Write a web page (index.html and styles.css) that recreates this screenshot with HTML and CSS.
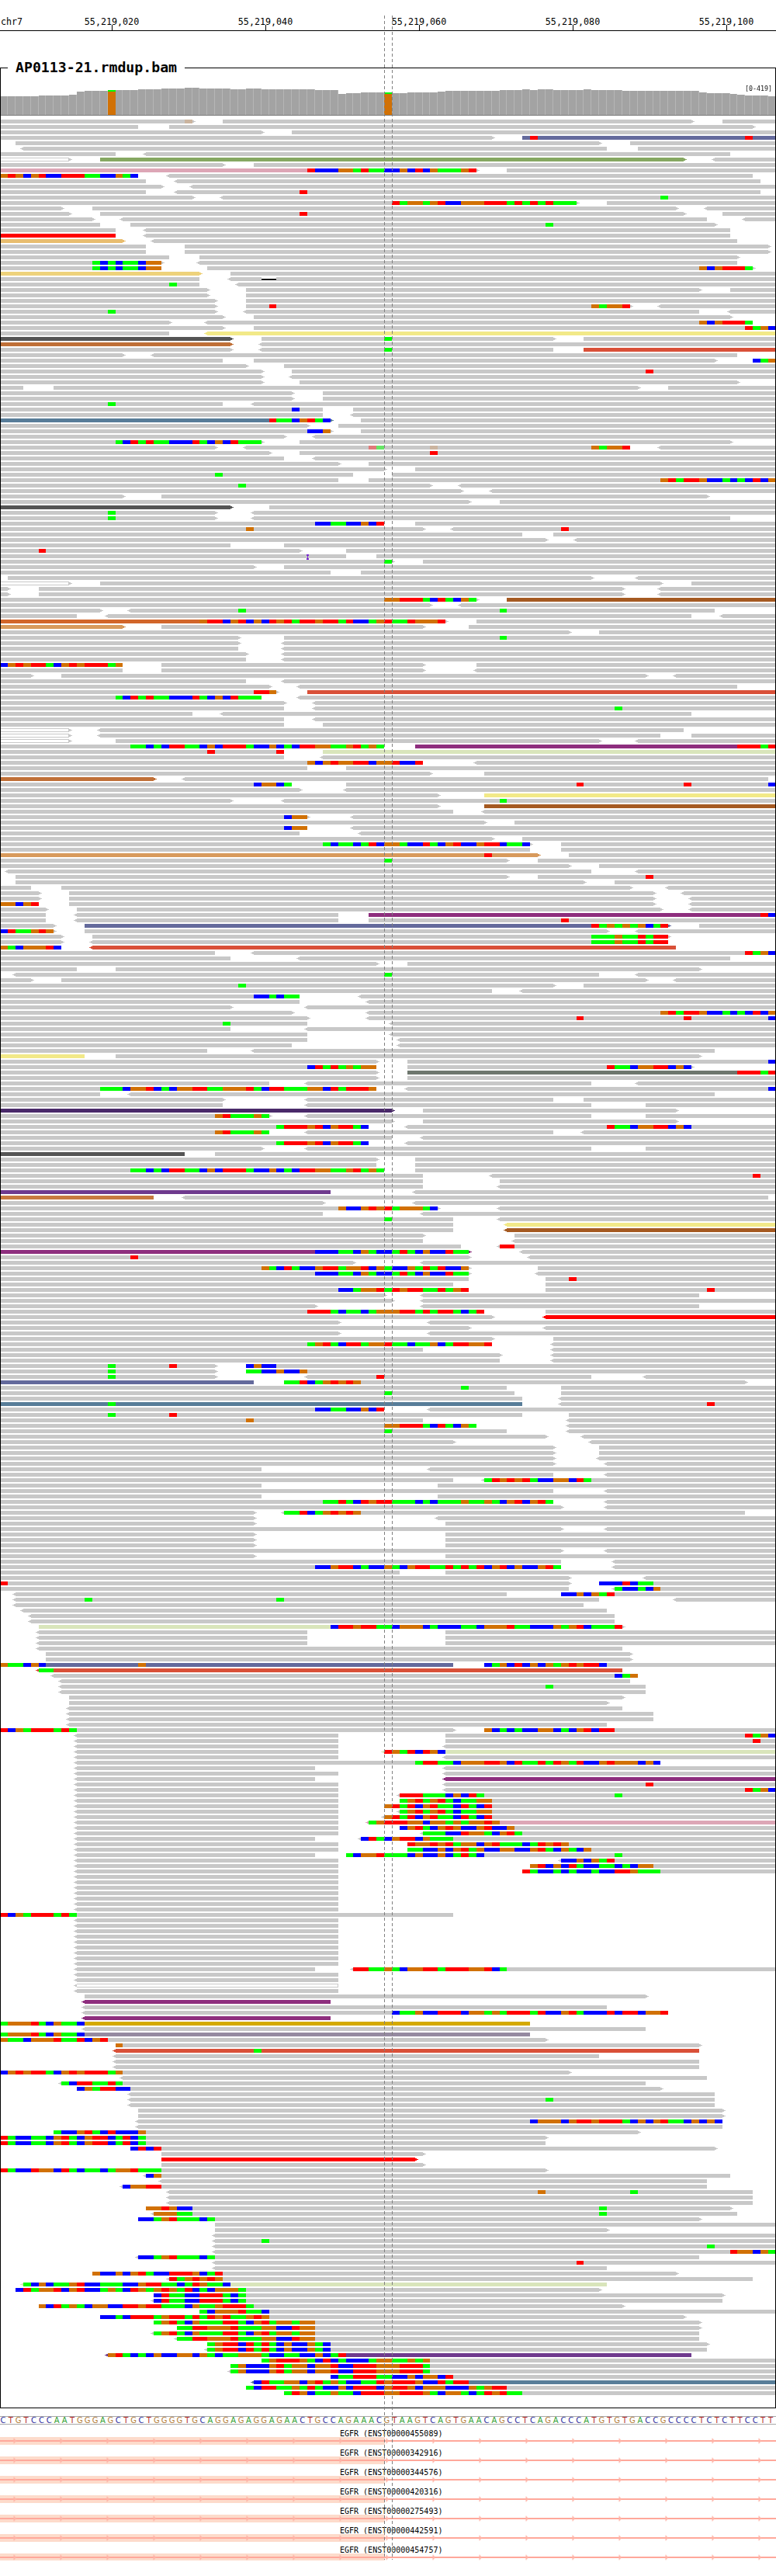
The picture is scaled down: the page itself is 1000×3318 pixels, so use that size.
FILE: index.html
```html
<!DOCTYPE html>
<html lang="en">
<head>
  <meta charset="UTF-8">
  <title>AP0113-21.rmdup.bam</title>
  <link rel="stylesheet" href="styles.css">
</head>
<body>

  <div class="viewer">
    <div class="ruler">
      <div class="chrom">chr7</div>
      <div class="tick">55,219,020</div>
      <div class="tick">55,219,040</div>
      <div class="tick">55,219,060</div>
      <div class="tick">55,219,080</div>
      <div class="tick">55,219,100</div>
    </div>

    <fieldset class="track">
      <legend class="track-name">AP0113-21.rmdup.bam</legend>
      <span class="cov-range">[0-419]</span>
      <canvas id="reads" class="reads"></canvas>
    </fieldset>

    <div class="sequence" id="sequence"></div>

    <svg class="defs" width="0" height="0">
      <defs>
        <pattern id="strand" width="60" height="10" patternUnits="userSpaceOnUse" x="17.5">
          <polygon points="0,1 3.5,5 0,9" fill="#ffb3a6"/>
        </pattern>
        <symbol id="exon" viewBox="0 0 1000 10" width="1000" height="10">
          <rect x="0" y="0" width="496" height="10" fill="#fddbcb"/>
          <rect x="0" y="4" width="1000" height="2" fill="#ffa89b"/>
          <rect x="0" y="0" width="1000" height="10" fill="url(#strand)"/>
        </symbol>
      </defs>
    </svg>

    <div class="genes">
      <div class="gene"><div class="gene-name">EGFR (ENST00000455089)</div><svg class="gene-track"><use href="#exon"/></svg></div>
      <div class="gene"><div class="gene-name">EGFR (ENST00000342916)</div><svg class="gene-track"><use href="#exon"/></svg></div>
      <div class="gene"><div class="gene-name">EGFR (ENST00000344576)</div><svg class="gene-track"><use href="#exon"/></svg></div>
      <div class="gene"><div class="gene-name">EGFR (ENST00000420316)</div><svg class="gene-track"><use href="#exon"/></svg></div>
      <div class="gene"><div class="gene-name">EGFR (ENST00000275493)</div><svg class="gene-track"><use href="#exon"/></svg></div>
      <div class="gene"><div class="gene-name">EGFR (ENST00000442591)</div><svg class="gene-track"><use href="#exon"/></svg></div>
      <div class="gene"><div class="gene-name">EGFR (ENST00000454757)</div><svg class="gene-track"><use href="#exon"/></svg></div>
    </div>

    <div class="guide guide-a"></div>
    <div class="guide guide-b"></div>
  </div>

  <script src="script.js"></script>
</body>
</html>
```

FILE: styles.css
```css
body { margin: 0; background: #fff; font-family: "DejaVu Sans Mono", monospace; color: #000; }
.viewer { position: relative; width: 1000px; height: 3318px; overflow: hidden; }

.ruler { display: flex; height: 39px; border-bottom: 1px solid #000; font-size: 11.7px; }
.chrom { width: 45px; flex: none; padding: 21px 0 0 1px; box-sizing: border-box; }
.tick { position: relative; width: 198px; flex: none; padding-top: 21px; text-align: center; box-sizing: border-box; }
.tick::after { content: ""; position: absolute; left: 99px; bottom: 0; width: 1px; height: 7px; background: #000; }

.track { position: relative; margin: 37px 0 0; padding: 0; min-width: 0; width: 1000px; box-sizing: border-box; border: 1px solid #000; }
.track-name { margin-left: 9px; padding: 0 10px; font-size: 18.2px; font-weight: bold; line-height: 20px; }
.cov-range { position: absolute; right: 4px; top: 12px; font-size: 8.3px; line-height: 10px; color: #111; }
.reads { display: block; }

.sequence { display: flex; height: 9px; margin: 10px 0 0 -1px; border-top: 1px solid #a8a8a8; border-bottom: 1px solid #a8a8a8; font-family: "DejaVu Sans", sans-serif; font-size: 10px; line-height: 9px; }
.base { flex: none; width: 9.9px; text-align: center; }
.base-A { color: #2f9e2f; }
.base-C { color: #2f2f9e; }
.base-G { color: #b5813e; }
.base-T { color: #b02a2a; }

.defs { position: absolute; }
.genes { padding-top: 1px; }
.gene { height: 25px; }
.gene-name { height: 15px; padding-left: 438px; font-size: 10px; line-height: 22px; white-space: nowrap; }
.gene-track { display: block; width: 1000px; height: 10px; }
.gene:last-child .gene-track { height: 9px; }

.guide { position: absolute; top: 20px; width: 1px; height: 3277px; background: repeating-linear-gradient(to bottom, #808080 0, #808080 4px, transparent 4px, transparent 7px); }
.guide-a { left: 495px; }
.guide-b { left: 505px; }
```

FILE: script.js
```js
const COLORS = {
  gray: '#c8c8c8', r: '#ff0000', g: '#00ff00', b: '#0000ff', o: '#d17105',
  t: '#cbb49f', x: '#e07a7a', h: '#66e666',
  p: '#dda6b6', s: '#646a9c', ol: '#86a862', m: '#555555', e: '#ff0000', y: '#e8bd6f',
  l: '#eed27b', ly: '#f2e988', br: '#c07038', R: '#d95038', n: '#587d99', P: '#8e2e7e',
  B: '#a55a22', O: '#d2662a', D: '#d89a5c', L: '#d9e5bb', G: '#6e776e', V: '#4a2a6a',
  v: '#6f3a8e', c: '#c87a40', au: '#d4a900', M: '#958aa0'
};
const MISMATCH = ['r', 'g', 'b', 'o'];
const BASE = 9.9;
const UNIT = 15.524; // positions below were read off at this many units per base

// one line per row of the pile-up
const ROWS = `
0-390> t373|450-1397>|1460-1568
0-279|342-1522>
0-530>|590-1568
0-995>|1055-1568~s r1071 r1505
31-1212>|1273-1568
<46-1226|1289-1568
0-234|<295-1475
0-140>~w|202-1382>~ol|<1443-1568
0-450>|513-1568
0-621~p|621-963> *621-963|1024-1568
0-279 *0-279|<342-1521
0-295|<357-1537
0-326>|<388-1568
0-295|<357-1537 r605
0-388>|<450-1568 g1335
0-1165> *792-1165|1226-1568
0-124>|187-1366>|<1428-1568
0-140>|202-1382> r605|1460-1568
0-186>|<248-1428|<1505-1568
0-202|263-1444> g1102
0-234|<295-1475
0-234~e|<295-1475
0-248>~y|<310-1490
0-295|373-1553>
0-295|373-1553>
0-342|403-1491>
0-326> *187-326|<403-1490
0-326 *187-326|419-1522> *1413-1521
0-403>~l|466-1568
0-403|<466-1568 d528-560
0-403 g342|<481-1568
0-419>|497-1413>|1475-1568
0-419>|497-1568
0-435>|497-1568
0-435>|497-1272> r544 *1195-1272|<1335-1568
0-435> g218|<497-1413|<1475-1568
0-450>|513-1475>
0-342>|<419-1521 *1413-1521
0-450>|513-1568 *1505-1568
0-342|<419-1568~ly
0-466>~m|528-1118> g777|1180-1568
0-466>~br|<528-1568
0-466>|<528-1118 g777|1180-1568~R
0-248>|<310-1490
0-450|513-1444>|1521-1568 *1521-1568
0-497>|575-1568
0-528>|590-1568 r1305
0-528>|<590-1568
0-528>|605-1491>
0-46|108-1290>|1350-1568
0-590>|652-1568
0-590>|652-1568
0-450 g218|<512-1568
0-652 b590|713-1568
0-652|<713-1568
0-668>~n *543-668|730-1568
0-621>|684-1568
0-668> *621-668|730-1568
0-575>|<636-1568
0-528> *234-528|605-1475>
0-435>|<497-1272 x745 h760 t869 *1195-1272|<1335-1568
0-544>|605-1568 r869
0-575|<636-1568
0-684>|745-1568
0-777>|839-1568
0-713 g434|792-1568
0-684|745-1568 *1335-1568
0-870> g481|<932-1568
0-932>|<994-1568
0-248>|326-1429>
0-948>|1010-1568
0-466>~m|544-1568
0-435> g218|<512-1568
0-435> g218|<512-1475
0-777 *637-777|839-1568
0-855> o497|<916-1568 r1134
0-1055|1118-1568
0-1103>|<1165-1568
0-466|575-1568
0-606> r78|699-1568
0-699 i621|760-1568
0-792> g777|855-1568
0-515>|575-1568
0-668|730-1568
16-1196>|<1290-1568
0-140>~w|202-1336>|1397-1568
0-16>|78-1260>|<1335-1568
0-16>|78-1260>|<1335-1568
0-965> *777-963|1024-1568~B
0-870>|<932-1568
0-202>|<263-1444 g481 g1010
0-155|<217-1397|<1459-1568
0-403~O|403-900> *403-900|963-1568
0-248>~D|326-855>|947-1568
0-1150>|1210-1568
0-483>|575-1568 g1010
0-483>|<575-1568
0-481|<575-1568
0-497>|<575-1568
0-497|<575-1568
0-248 *0-248|326-855>|963-1568
0-248|326-855>|<963-1568
0-62>|124-1306>|<1366-1568
0-497|<575-1568
0-544>|<605-1490
0-558> *513-558|621-1568~R
0-528 *234-528|<605-1568
0-575>|<636-1568
0-575|<636-1568 g1242
0-388|<450-1397
0-575|<636-1568
0-575|652-1568
0-140>~w|<202-1382
0-140>~w|<202-1335|1397-1568
0-140>~w|234-1212>|<1290-1568
0-777 *263-777|839-1568~P *1490-1568
0-575 r419 r558|652-1568~L
0-575|<652-1568
0-855 *621-855|<963-1568
0-621|699-1568
0-870>|978-1568
0-310>~br|<372-1552
0-590 *513-590|699-1568 r1165 r1381 b1552
0-606>|<699-1568
0-885>|978-1568~ly
0-466>|<575-1568 g1010
0-885>|978-1568~B
0-916|<978-1568
0-621> *575-621|<713-1568
0-980>|1040-1568
0-621 *575-621|<713-1568
0-605|<730-1568
0-995>|1055-1568
0-1072> *652-1072|1134-1568
0-1071|1134-1568
0-1088>~D r978|1149-1568
0-1025> g777|1087-1568
0-1150>|1210-1568
<16-1195|<1290-1568
31-1025>|1087-1568 r1305
31-1180>|1242-1568
0-62|124-1275>|<1350-1568
0-80>|140-1322>|<1381-1568
0-80>|140-1322>|<1397-1568
0-78 *0-78|140-1322>|<1397-1568
0-95>|155-1336>|<1397-1568
0-93|<155-684|745-1568~P *1537-1568
0-93|<155-684|745-1568 r1134
0-110>|171-1352>~s *1195-1352|1413-1568
0-108> *0-108|171-1228>|<1290-1568
0-125>|187-1350> *1195-1350
0-125>|<187-1350 *1195-1350
0-124 *0-124|<187-1366~R
0-434|<512-1568 *1505-1568
0-466|<605-1475
0-762>|823-1568
0-155|234-1414>
<31-1210 g777|<1290-1568
0-62>|124-1306>|<1366-1568
0-1118> g481|1180-1568
0-994|<1055-1568
0-605 *513-605|<730-1568
0-605|<745-1568
0-466>|<621-1568
0-590>|<745-1568 *1335-1568
0-621>|<745-1568 r1165 r1381 b1552
0-621 g450|<792-1568
0-466|<621-1568
0-621|<792-1568
0-621|<808-1568
0-590|<808-1568
0-419|<512-1444
0-171~ly|234-1414>
0-762>|823-1568 b1552
0-760 *621-760|823-1398> *1226-1397
0-762>|823-1568~G *1490-1568
0-762>|823-1568
0-544|<621-1195|<1290-1568
0-760 *202-760|<823-1568 b1552
0-202|<263-1444
0-450>|<621-1118|1180-1568
0-450|<621-1195|1305-1568
0-792>~V|855-1366>
0-544> *434-544|<621-1195|1305-1568
0-792>|855-1366>
0-745 *558-745|<823-1568 *1226-1397
0-544 *434-544|<621-1118|<1180-1568
0-792|<855-1568
0-745 *558-745|<823-1568
0-530>|<621-1195|1305-1568
0-373~m|434-1568
0-762>|839-1568
0-760|839-1568
0-777 *263-777|839-1568
0-855|<994-1568 r1521
0-855|1010-1568
0-855|<1010-1568
0-668~v|<839-1568
0-310~c|<372-1552
0-652>|<839-1568
0-885> *684-885|<1010-1568
0-652|<855-1568
0-916 g777|<1010-1568
0-916|<1024-1568~ly
0-916|<1024-1568~B
0-856>|1040-1568
0-855|<1040-1568
0-932|<1010-1568 r1010 r1025
0-948>~P *637-948|<1055-1568
0-950> r263|<1070-1568
0-715>|<855-1568
0-948> *528-948|1087-1568
0-948> *637-948|<1087-1568
0-948|1102-1568 r1149
0-916|1102-1568
0-948 *684-948|1102-1568 r1428
0-778>|<855-1413
0-792>|<855-1568
0-638>|<855-1413
0-978 *621-978|1102-1568
0-995>|<1102-1568~e
0-685>|<870-1568
0-948>|<1102-1568
0-685>|<870-1568
0-995>|1118-1568
0-994 *621-994|<1118-1568
0-855|<1118-1568
0-1010>|<1118-1568
0-1010|<1118-1568
0-435> g218 r342|497-1568 *497-558
0-435> g218|497-1568 *497-621
0-435> g218|<621-1195 r760|<1305-1568
0-513~s|575-1505> *575-730
0-1024 g932|1134-1568
0-1040 g777|1134-1568
0-1055|<1134-1568
0-1055~n g218|<1134-1568 r1428
0-777 *637-777|<870-1568
0-1055 g218 r342|1149-1568
0-855 o497|<1149-1568
0-963 *777-963|<1149-1568
0-1024 g777|<1149-1568
0-1103>|<1180-1568
0-916>|<1195-1568
0-1120>|1210-1568
0-1120>|1210-1568
0-1120>|<1210-1568
0-1120>|<1226-1568
0-528|<870-1568
0-1118|<1226-1568
0-916|<978-1568 *978-1195
0-528|885-1568
0-1118|<1226-1568
0-528|885-1568
0-1118 *652-1118|<1226-1568
0-1135>|<1226-1568
0-515>|<575-1505 *575-730
0-515>|<885-1568
0-515>|900-1568
0-1135>|<1226-1568
0-515>|900-1568
0-515>|900-1568
0-515>|900-1568
0-1135>|<1226-1568
0-515>|900-1568
0-1134|<1242-1568
0-1134 *637-1134|<1242-1568
0-808|900-1568
0-1150>|<1305-1568
0-1150> r0|1210-1568 *1210-1320
0-1149|<1242-1568 *1242-1335
<31-1024|1134-1568 *1134-1242
<31-1210 g171 g558|<1366-1568
<31-1179
<46-1226
<62-1242
<62-1242
78-668~L|668-1260> *668-1258
<78-621|900-1568
<78-621|900-1568
<78-621|900-1568
<78-1258
93-1275>
93-1275>
0-93 *0-93|93-916~s o279|978-1568 *978-1226
<78-1258~R g78 g93
<108-1288 b1242 g1258 o1273
<124-1273
<124-1305 g1102
<124-1305
140-1260>
140-1228>
<140-1258
<140-1320
<140-1320
<140-1226
0-916> *0-155|978-1568 *978-1242
<155-684|900-1568 *1505-1568
<155-684|900-1568 r1521
<155-684|<900-1568
<155-684|<777-1568~L *777-900
<155-684|<900-1568
<155-1334 *839-1334
<155-637|<900-1568
<155-684|<900-1568
<155-637|<900-1568~P
<155-684|<900-1568 r1305
<155-684|<900-1568 *1505-1568
<155-684|<808-1568 *808-978 g1242
<155-684|808-1568 *808-994
<155-684|777-1568 *777-994
<155-684|<808-1568 *808-994
<155-684|<777-1568 *777-994
<155-684|<745-1568~p *745-1010
<155-684|808-1568 *808-1040
<155-684|<855-1568 *855-1055
<155-637|<730-1568 *730-916
<155-684|823-1568 *823-1149
<155-684|823-1568 *823-1195
<155-637|699-1568 *699-978 g1242
<155-684|<1134-1568 *1134-1242
<155-684|1071-1568 *1071-1320
<155-684|1055-1568 *1055-1335
<155-684
<155-684
<155-684
<155-684
<155-684
<155-684
<155-684
0-916 *0-155
<155-684
<155-684
<155-684
<155-684
<155-684
<155-684
<155-684
<155-684
<155-684
<155-637|<713-1568 *713-1024
<155-684
<155-684
<155-684~w
<155-684
171-1308>
<171-668~P
<171-1226
<171-1350 *792-1350
<171-668~P
0-1071~au *0-171
<171-1305
0-1071~M *0-171
0-1105> *0-218
234-1415> o234
<234-1413~R g513
<234-1210
<234-1413
<234-1413
0-1150> *0-248
<248-1428
<124-1305 *124-248
155-1338> *155-263
<263-1444
<263-1444 g1102
<263-1444
279-1462>
279-1462>
<279-1460 *1071-1460
<279-1460
108-1290> *108-295
0-1105> *0-295
0-1102 *0-295
263-1445> *263-326
326-857>
326-842>~e
326-857>
0-1105> *0-326
<295-1475 *295-326
<326-1428
<248-1428 *248-326
<342-1521 o1087 g1273
<342-1521
<342-1521
295-1478> *295-388 g1210
<310-1490 *310-388 g1210
279-1415> *279-434
434-1568
434-1228>
<434-1568
<434-1568 g528
<434-1568 g1428
<434-1568 *1475-1568
<279-1413 *279-434
<434-1568 r1165
<434-1226
187-1368> *187-450
<342-1521 *342-450
<46-1226~L *46-466
31-1213> *31-497
310-1462> *310-497
<310-1460 *310-497
78-1260> *78-513
403-1568 *403-544
202-1385> *202-544
310-1415> *310-637
357-1415> *357-637
<310-1413 *310-637
<357-1413 *357-637
419-1431> *419-668
<419-1428 *419-668
<218-1397~v *218-699
528-1568 *528-870
466-1568 *466-870
<466-1568 *466-870
668-1568 *668-916
<513-1568~n *513-947
497-1568 *497-1024
574-1568 *574-1055
`.trim().split('\n');

// coverage as runs of [end of run, top of bar * 3]
const COVERAGE = [[78,372],[140,369],[155,366],[171,354],[219,351],[234,354],[279,348],[326,345],[373,342],[403,339],[466,342],[497,345],[528,342],[637,345],[684,348],[699,363],[730,360],[777,357],[792,363],[823,360],[885,357],[900,354],[1010,351],[1055,348],[1071,345],[1087,348],[1118,345],[1180,348],[1195,345],[1258,348],[1413,351],[1428,357],[1475,360],[1490,363],[1505,366],[1552,369],[1568,372]];

const SEQUENCE = 'CTGTCCCAATGGGAGCTGCTGGGGTGCAGGAGAGGAGAACTGCCAGAAACGTAAGTCAGTGAACAGCCTCAGACCCATGTGTGACCGCCCCTCTCTTCCTT';

function baseIndex(x) { return Math.round(x / UNIT); }
function pixel(n) { return Math.round(n * BASE); }
function snap(x) { return pixel(baseIndex(x)); }

function noise(ctx, y, a, b) {
  // same span gives the same pattern, paired reads in the pile-up repeat it
  let seed = a * 131 + b * 17 + 7;
  const rand = () => { seed = (seed * 1664525 + 1013904223) % 4294967296; return (seed >>> 8) / 16777216; };
  for (let i = 0; i < 6; i++) rand();
  let n = baseIndex(a);
  const end = baseIndex(b);
  let last = -1;
  while (n < end) {
    let pick = Math.floor(rand() * 4);
    if (pick === last) pick = (pick + 1) % 4;
    last = pick;
    const roll = rand();
    const len = Math.min(roll < 0.72 ? 1 : roll < 0.92 ? 2 : 3, end - n);
    ctx.fillStyle = COLORS[MISMATCH[pick]];
    ctx.fillRect(pixel(n), y, pixel(n + len) - pixel(n), 5);
    n += len;
  }
}

function drawRead(ctx, y, m) {
  const x1 = snap(+m[2]);
  const x2 = snap(+m[3]);
  const key = m[5];
  const color = key && key !== 'w' ? COLORS[key] : COLORS.gray;
  ctx.fillStyle = color;
  ctx.fillRect(x1, y, x2 - x1, 5);
  if (key === 'w') {
    ctx.fillStyle = '#fff';
    ctx.fillRect(x1, y + 1, x2 - x1 - 1, 3);
    ctx.fillStyle = color;
  }
  if (m[4]) {
    ctx.fillRect(x2, y + 1, 2, 3);
    ctx.fillRect(x2 + 2, y + 2, 2, 1);
  }
  if (m[1]) {
    ctx.fillRect(x1 - 2, y + 1, 2, 3);
    ctx.fillRect(x1 - 4, y + 2, 2, 1);
  }
}

function drawRow(ctx, k, row) {
  const y = 154 + 7 * k;
  row.split('|').forEach(part => {
    part.split(' ').forEach(token => {
      let m;
      if ((m = token.match(/^(<?)(\d+)-(\d+)(>?)(?:~(\w+))?$/))) {
        drawRead(ctx, y, m);
      } else if ((m = token.match(/^\*(\d+)-(\d+)$/))) {
        noise(ctx, y, +m[1], +m[2]);
      } else if ((m = token.match(/^d(\d+)-(\d+)$/))) {
        ctx.fillStyle = '#fff';
        ctx.fillRect(snap(+m[1]), y, snap(+m[2]) - snap(+m[1]), 5);
        ctx.fillStyle = '#000';
        ctx.fillRect(snap(+m[1]), y + 2, snap(+m[2]) - snap(+m[1]), 2);
      } else if ((m = token.match(/^i(\d+)$/))) {
        const x = Math.round(+m[1] / 1.568);
        ctx.fillStyle = '#7a2ad0';
        ctx.fillRect(x, y, 1, 7);
        ctx.fillRect(x - 1, y, 3, 2);
        ctx.fillRect(x - 1, y + 5, 3, 2);
      } else if ((m = token.match(/^([rgboxht])(\d+)$/))) {
        const n = baseIndex(+m[2]);
        ctx.fillStyle = COLORS[m[1]];
        ctx.fillRect(pixel(n), y, pixel(n + 1) - pixel(n), 5);
      }
    });
  });
}

function drawCoverage(ctx) {
  let n = 0;
  COVERAGE.forEach(([end, top]) => {
    const stop = baseIndex(end);
    for (; n < stop; n++) {
      const x = pixel(n);
      const w = pixel(n + 1) - x;
      const y = Math.round(top / 3);
      if (n === 14 || n === 50) {
        ctx.fillStyle = COLORS.o;
        ctx.fillRect(x, y, w, 148 - y);
        ctx.fillStyle = COLORS.g;
        ctx.fillRect(x, y - 2, w, 2);
      } else {
        ctx.fillStyle = '#a3a3a3';
        ctx.fillRect(x, y, w, 148 - y);
        ctx.fillStyle = '#b6b6b6';
        ctx.fillRect(x + w - 1, y, 1, 148 - y);
      }
    }
  });
  ctx.fillStyle = '#7d7d7d';
  ctx.fillRect(0, 148, 1000, 1);
}

function renderReads() {
  const canvas = document.getElementById('reads');
  const box = canvas.getBoundingClientRect();
  const bottom = 3101;
  canvas.width = 998;
  canvas.height = bottom - Math.round(box.top);
  const ctx = canvas.getContext('2d');
  ctx.translate(-1, -Math.round(box.top));
  drawCoverage(ctx);
  ROWS.forEach((row, k) => drawRow(ctx, k, row));
}

function renderSequence() {
  const seq = document.getElementById('sequence');
  seq.innerHTML = SEQUENCE.split('').map(c => `<span class="base base-${c}">${c}</span>`).join('');
}

renderSequence();
renderReads();
```
